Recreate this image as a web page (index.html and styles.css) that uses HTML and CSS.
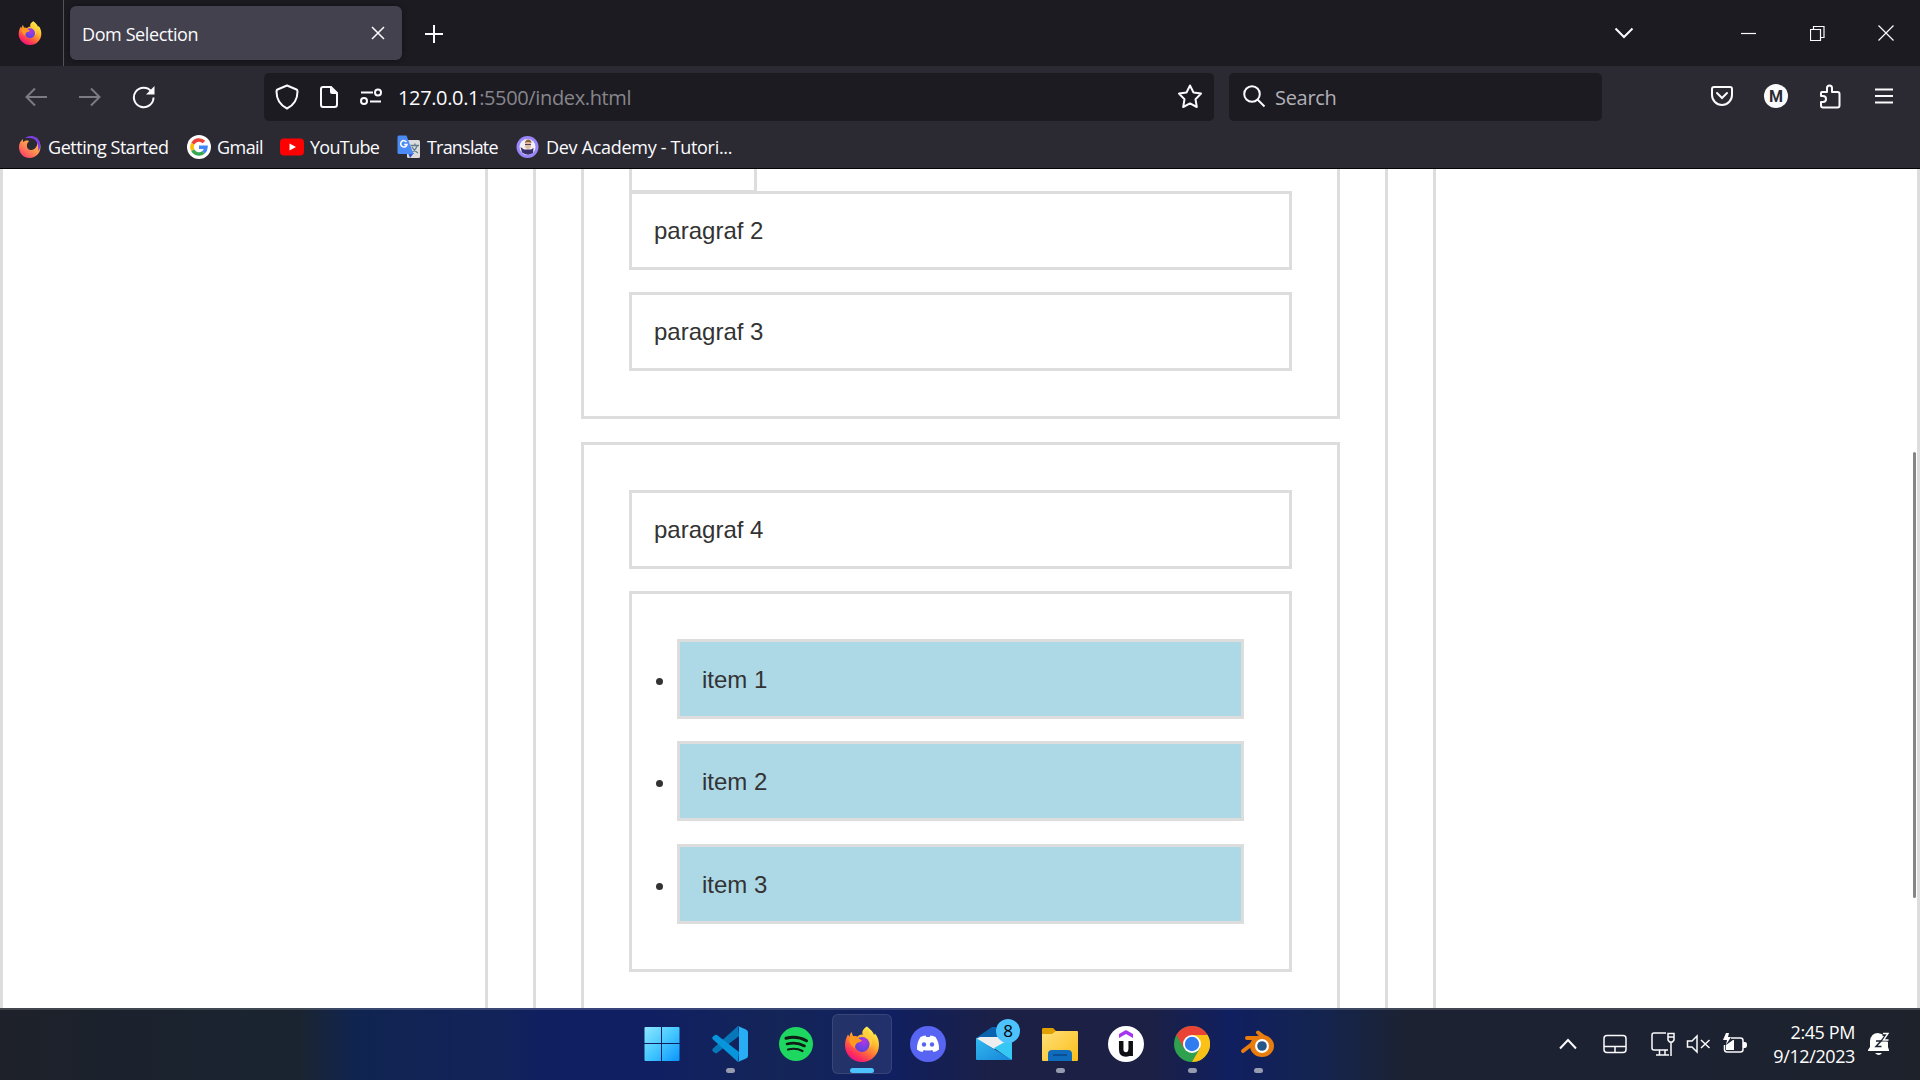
FILE: index.html
```html
<!DOCTYPE html>
<html lang="en">
<head>
<meta charset="utf-8">
<title>Dom Selection</title>
<link rel="stylesheet" href="styles.css">
</head>
<body>
<svg class="defs" width="0" height="0" aria-hidden="true">
  <defs>
    <linearGradient id="fox" x1=".85" y1=".1" x2=".3" y2="1"><stop offset="0" stop-color="#fff44f"/><stop offset=".35" stop-color="#ffb52e"/><stop offset=".6" stop-color="#ff7139"/><stop offset=".85" stop-color="#ff2a5f"/><stop offset="1" stop-color="#e31587"/></linearGradient>
    <radialGradient id="globe" cx=".6" cy=".3" r=".8"><stop offset="0" stop-color="#b833e1"/><stop offset=".5" stop-color="#7542e5"/><stop offset="1" stop-color="#5b3fd0"/></radialGradient>
    <linearGradient id="win" x1="0" y1="0" x2="1" y2="1"><stop offset="0" stop-color="#8ee6ff"/><stop offset=".5" stop-color="#45c8ff"/><stop offset="1" stop-color="#0a94ff"/></linearGradient>
    <linearGradient id="folder" x1="0" y1="0" x2="1" y2="1"><stop offset="0" stop-color="#ffe07a"/><stop offset="1" stop-color="#fbbd18"/></linearGradient>
    <linearGradient id="mail" x1="0" y1="0" x2="1" y2="1"><stop offset="0" stop-color="#32b9f0"/><stop offset="1" stop-color="#1685d8"/></linearGradient>
    <linearGradient id="swirl" x1="1" y1="0" x2=".2" y2="1"><stop offset="0" stop-color="#7542e5"/><stop offset=".25" stop-color="#ffbd4f"/><stop offset=".6" stop-color="#ff8a50"/><stop offset="1" stop-color="#ff3a6a"/></linearGradient>
    <symbol id="firefox" viewBox="0 0 36 36">
      <path fill="url(#fox)" d="M23 .5C27 4 29.500 6 30 9L31 7.500C34 11 35 15 35 19C35 28.500 27.500 36 18 36C8.500 36 1 28.500 1 19.500C1 15 2.400 11 4 8.500L5.500 11C5.500 9 6.500 7 7.500 6L9 10C11 10 12 10 13 11C15 9 17.500 8 19 9C17 6 19.500 2.500 23 .5Z"/>
      <circle cx="18" cy="18.500" r="7.500" fill="url(#globe)"/>
      <path fill="#ff9820" d="M5 12C9 9 14 10 14 12L18 14.500C17 16 14.500 16 13 17C11.500 18.500 11 20 11 22C8 21 5 17 5 12Z"/>
      <path fill="#ffcf3d" d="M19 9C25 11 28 17 25 22C29 18 29 12 25 8L24 3C21 5 20 7 19 9Z"/>
    </symbol>
  </defs>
</svg>

<header class="browser">
  <div class="tabstrip">
    <div class="view-button"><svg width="24" height="24"><use href="#firefox"/></svg></div>
    <div class="tab">
      <span class="tab-title">Dom Selection</span>
      <svg class="line" width="14" height="14" viewBox="0 0 14 14"><path d="M1 1L13 13M13 1L1 13"/></svg>
    </div>
    <svg class="line new-tab" width="18" height="18" viewBox="0 0 18 18"><path stroke-width="2" d="M9 0V18M0 9H18"/></svg>
    <div class="window-controls">
      <svg class="line" width="20" height="12" viewBox="0 0 20 12"><path stroke-width="2" d="M1.500 1.500L10 10L18.500 1.500"/></svg>
      <svg class="line thin minimize" width="15" height="3" viewBox="0 0 15 3"><path d="M0 1.500H15"/></svg>
      <svg class="line thin restore" width="15" height="15" viewBox="0 0 15 15"><path d="M.5 3.500H10.500V14.500H.5ZM3.500 3.500V.5H14V11.500H11"/></svg>
      <svg class="line thin" width="16" height="16" viewBox="0 0 16 16"><path d="M.5 .5L15.500 15.500M15.500 .5L.5 15.500"/></svg>
    </div>
  </div>

  <div class="navbar">
    <div class="history">
      <svg class="line dim" width="22" height="20" viewBox="0 0 22 20"><path d="M22 10H1.500M10 1.500L1.500 10L10 18.500"/></svg>
      <svg class="line dim" width="22" height="20" viewBox="0 0 22 20"><path d="M0 10H20.500M12 1.500L20.500 10L12 18.500"/></svg>
      <svg class="line" width="24" height="24" viewBox="0 0 24 24"><path stroke-width="2" d="M19.500 6.500A9.800 9.800 0 1 0 21.500 12.500"/><path fill="#fbfbfe" stroke="none" d="M22.500 1V9.500H14Z"/></svg>
    </div>
    <div class="urlbar">
      <svg class="line" width="24" height="26" viewBox="0 0 24 26"><path stroke-width="2" stroke-linejoin="round" d="M12 1.500L21.500 5.500Q22.500 6 22.500 7.500C22.500 15 19 21 12 24.500C5 21 1.500 15 1.500 7.500Q1.500 6 2.500 5.500Z"/></svg>
      <svg class="line page-icon" width="20" height="24" viewBox="0 0 20 24"><path stroke-width="2" d="M4 2H12L18 8V19.500Q18 22 15.500 22H4Q2 22 2 19.500V4Q2 2 4 2Z"/><path fill="#fbfbfe" stroke="none" d="M11 2L18.500 9H13Q11 9 11 7Z"/></svg>
      <svg class="line sliders" width="22" height="18" viewBox="0 0 22 18"><path stroke-width="2" d="M1 4.500H13M10 13.500H21"/><circle stroke-width="2" cx="18" cy="4.500" r="3"/><circle stroke-width="2" cx="4" cy="13" r="3"/></svg>
      <span class="url">127.0.0.1<span class="url-path">:5500/index.html</span></span>
      <svg class="line" width="26" height="25" viewBox="0 0 26 25"><path stroke-width="2" stroke-linejoin="round" d="M13 1.500L16.500 8.500L24 9.600L18.500 15.200L19.800 23L13 19.400L6.200 23L7.500 15.200L2 9.600L9.500 8.500Z"/></svg>
    </div>
    <div class="searchbar">
      <svg class="line" width="23" height="23" viewBox="0 0 23 23"><circle stroke-width="2" cx="9" cy="9" r="7.800"/><path stroke-width="2" d="M14.500 14.500L21.500 21.500"/></svg>
      <span class="placeholder">Search</span>
    </div>
    <div class="toolbar-actions">
      <svg class="line" width="22" height="20" viewBox="0 0 22 20"><path stroke-width="2" d="M3 1H19Q21 1 21 3V9A10 10 0 0 1 1 9V3Q1 1 3 1Z"/><path stroke-width="2" stroke-linecap="round" d="M6 7L11 12L16 7"/></svg>
      <span class="account">M</span>
      <svg class="line" width="22" height="25" viewBox="0 0 22 25"><path stroke-width="2" stroke-linejoin="round" d="M2 12V9Q2 8 3 8H8V4Q8 1.500 10.500 1.500Q13 1.500 13 4V8H18.500Q20.500 8 20.500 10V21.500Q20.500 23.500 18.500 23.500H4Q2 23.500 2 21.500V18H4Q7 18 7 15Q7 12 4 12Z"/></svg>
      <svg class="line menu" width="18" height="16" viewBox="0 0 18 16"><path stroke-width="2" d="M0 1.500H18M0 8H18M0 14.500H18"/></svg>
    </div>
  </div>

  <nav class="bookmarks">
    <a class="bookmark"><svg width="24" height="24" viewBox="0 0 24 24"><path fill="url(#swirl)" d="M5 4C1 7 0 12 2 17C5 24 15 25 20 19C24 14 23 7 18 2C21 8 19 14 14 15C9 16 7 10 11 6C8 5 7 6 5 7Z"/><path fill="#7d3fe0" d="M7 3C12-1 20 1 22 8C23 11 22 14 20 16C21 10 19 3 11 3Z"/></svg><span class="label getting-started">Getting Started</span></a>
    <a class="bookmark"><svg width="24" height="24" viewBox="0 0 24 24"><circle cx="12" cy="12" r="12" fill="#fff"/><g fill="none" stroke-width="3.500"><path stroke="#ea4335" d="M5.800 8.800A7 7 0 0 1 17 7"/><path stroke="#fbbc05" d="M5.800 15.200A7 7 0 0 1 5.800 8.800"/><path stroke="#34a853" d="M16.500 17.400A7 7 0 0 1 5.800 15.200"/><path stroke="#4285f4" d="M12 12.200H19A7 7 0 0 1 16.500 17.400"/></g></svg><span class="label gmail">Gmail</span></a>
    <a class="bookmark"><svg width="24" height="24" viewBox="0 0 24 24"><rect y="3.500" width="24" height="17" rx="4" fill="#f00"/><path fill="#fff" d="M9.500 8.500L16 12L9.500 15.500Z"/></svg><span class="label youtube">YouTube</span></a>
    <a class="bookmark"><svg width="24" height="24" viewBox="0 0 24 24"><rect x="10" y="5" width="13" height="18" rx="1.500" fill="#dcdcdc"/><path d="M13.500 10.500H22M18 8.500V10.500M20 11Q18 16 14 18M15 12Q17 16 21 18" fill="none" stroke="#607d8b" stroke-width="1.300"/><path fill="#3456c4" d="M11 18H17L13 23Z"/><path fill="#4b8bf5" d="M2 .5H9.500L16.500 19H2Q.5 19 .5 17.500V2Q.5 .5 2 .5Z"/><path d="M9.500 7A3.200 3.200 0 1 0 10 9.500H7.200" fill="none" stroke="#fff" stroke-width="1.500"/></svg><span class="label translate">Translate</span></a>
    <a class="bookmark"><svg width="24" height="24" viewBox="0 0 24 24"><circle cx="11.500" cy="12" r="11" fill="#9a86fb"/><circle cx="11.500" cy="12" r="8" fill="#f0eef6"/><path fill="#372f68" d="M4.500 12L8 14.500H15L17.500 13L17 18Q11.500 21.500 6 17.500Z"/><ellipse cx="12" cy="10" rx="3" ry="4" fill="#e4b9a0"/><path d="M9 8Q9.500 4.500 12 4.500Q15.500 4.500 15.500 8Q12 6 9 8" fill="#88613d"/><path d="M9 9.500H15" stroke="#514252"/></svg><span class="label academy">Dev Academy - Tutori...</span></a>
  </nav>
</header>

<main class="page">
  <div class="scroll-thumb"></div>
  <div class="box outer"><div class="box middle">
    <section class="box group first">
      <div class="box clipped"></div>
      <p class="box paragraph">paragraf 2</p>
      <p class="box paragraph">paragraf 3</p>
    </section>
    <section class="box group second">
      <p class="box paragraph">paragraf 4</p>
      <ul class="box list">
        <li class="box item">item 1</li>
        <li class="box item">item 2</li>
        <li class="box item">item 3</li>
      </ul>
    </section>
  </div></div>
</main>

<footer class="taskbar">
  <div class="apps">
    <div class="app start"><svg width="36" height="36" viewBox="0 0 36 36"><path fill="url(#win)" d="M1.500 1H17V17H.5V2Q.5 1 1.500 1ZM18 1H34.500Q35.500 1 35.500 2V17H18ZM.5 18H17V35H1.500Q.5 35 .5 34ZM18 18H35.500V34Q35.500 35 34.500 35H18Z"/></svg></div>
    <div class="app running"><svg width="36" height="36" viewBox="0 0 36 36"><path fill="#0877b9" d="M26 0L1 22.500Q-.5 24 1 25.500L3 27Q4 27.500 5 27L27 10Z"/><path fill="#0795dc" d="M26 36L1 13.500Q-.5 12 1 10.500L3 9Q4 8.500 5 9L27 26Z"/><path fill="#29adf4" d="M26 0L34 3.500Q36 4.500 36 6V30Q36 31.500 34 32.500L26 36Q27 35 27 33V3Q27 1 26 0Z"/></svg></div>
    <div class="app"><svg width="36" height="36" viewBox="0 0 36 36"><circle cx="18" cy="18" r="17" fill="#1ed760"/><g fill="none" stroke="#101c16" stroke-linecap="round"><path stroke-width="3" d="M8 12.300Q19 9.500 28.500 14.700"/><path stroke-width="2.600" d="M9 18Q18.500 15.500 26.500 20"/><path stroke-width="2.200" d="M10 23.500Q18 21.500 24.500 25"/></g></svg></div>
    <div class="app running active"><svg width="36" height="36"><use href="#firefox"/></svg></div>
    <div class="app"><svg width="36" height="36" viewBox="0 0 36 36"><circle cx="18" cy="18" r="18" fill="#5865f2"/><path fill="#fff" d="M10.500 11Q13 9.500 15.500 9.500L16.300 11H19.700L20.500 9.500Q23 9.500 25.500 11Q29.500 17 29 23.500Q26.500 25.500 23.500 26L22.200 24Q18 25 13.800 24L12.500 26Q9.500 25.500 7 23.500Q6.500 17 10.500 11Z"/><circle cx="14" cy="18.500" r="2.200" fill="#5865f2"/><circle cx="22" cy="18.500" r="2.200" fill="#5865f2"/></svg></div>
    <div class="app"><svg width="36" height="36" viewBox="0 0 36 36"><path fill="#0b63b0" d="M0 12L16 1H20L36 12V20H0Z"/><path fill="#eee" d="M4 11H32L31 17L18 23L0 13Z"/><path fill="#35c8f5" d="M36 12V33Q36 34 35 34L18 22Z"/><path fill="url(#mail)" d="M0 12L36 34H1Q0 34 0 33Z"/></svg><span class="badge">8</span></div>
    <div class="app running"><svg width="36" height="36" viewBox="0 0 36 36"><path fill="#dfa000" d="M0 9V3Q0 2 1.500 2H11L14 5V9Z"/><path fill="url(#folder)" d="M0 8H10L14 5H35Q36 5 36 6V34Q36 35 35 35H1Q0 35 0 34Z"/><path fill="#0f6cbd" d="M6 35V28Q6 24 10 24H26Q30 24 30 28V35Z"/><path stroke="#0a4f94" stroke-width="2" d="M11 29H25"/></svg></div>
    <div class="app"><svg width="36" height="36" viewBox="0 0 36 36"><circle cx="18" cy="18" r="18" fill="#fff"/><path fill="#a435f0" d="M18 4L25 8V12L18 8L11 12V8Z"/><path fill="none" stroke="#101014" stroke-width="4.500" d="M13.200 15V23.500Q13.200 28.500 18 28.500Q22.500 28.500 22.500 23.500M22.700 15V30"/></svg></div>
    <div class="app running"><svg width="36" height="36" viewBox="0 0 36 36"><circle cx="18" cy="18" r="18" fill="#2fa04d"/><path fill="#ea4335" d="M2.400 9A18 18 0 0 1 33.600 9H18L10.200 22.500Z"/><path fill="#fbc116" d="M33.600 9A18 18 0 0 1 18 36L25.800 22.500L18 9Z"/><circle cx="18" cy="18" r="9" fill="#fff"/><circle cx="18" cy="18" r="7.200" fill="#2f7cf0"/></svg></div>
    <div class="app running"><svg width="36" height="36" viewBox="0 0 36 36"><g fill="none" stroke="#e87d0d" stroke-width="4" stroke-linecap="round"><path d="M18 6.500L29 15"/><path d="M7 12H22"/><path d="M3 25L18 13.500"/></g><ellipse cx="22" cy="20" rx="12" ry="11" fill="#e87d0d"/><circle cx="22" cy="20" r="7" fill="#fff"/><circle cx="22" cy="20" r="4.800" fill="#265787"/></svg></div>
  </div>
  <div class="tray">
    <svg class="line" width="18" height="12" viewBox="0 0 18 12"><path stroke-width="2" d="M1 10.500L9 2L17 10.500"/></svg>
    <svg class="line touchpad" width="24" height="20" viewBox="0 0 24 20"><rect x="1" y="1.500" width="22" height="17" rx="3"/><path d="M1 12.500H23M12 12.500V18"/></svg>
    <svg class="line" width="26" height="26" viewBox="0 0 26 26"><path d="M16 2H4Q2 2 2 4V17Q2 19 4 19H18M6 24H19M9.500 19V24M15 19V24M18 2.500H24V9L22.500 11H19.500L18 9ZM18 6H24M21 11V25"/></svg>
    <svg class="line volume" width="25" height="20" viewBox="0 0 25 20"><path d="M1.500 7H6L11 2V18L6 13H1.500ZM15 6L23.500 14M23.500 6L15 14"/></svg>
    <svg class="line battery" width="26" height="22" viewBox="0 0 26 22"><path d="M9 5H18.500Q21 5 21 7.500V16.500Q21 19 18.500 19H5Q2.500 19 2.500 16.500V12"/><path fill="#fff" stroke="none" d="M4 17V12L11 7H12V17ZM21 9H23Q25 9 25 12Q25 15 23 15H21ZM4 0H7L6 4H9L4 12L5 7H1Z"/></svg>
    <div class="clock"><span class="time">2:45 PM</span><span class="date">9/12/2023</span></div>
    <svg class="bell" width="22" height="24" viewBox="0 0 22 24"><path fill="#fff" d="M0 18L2 15V9Q3 1 10 1L17 3V7L20 10V15L21 18V19H0ZM7 21H14Q11 25 7 21Z"/><path fill="none" stroke="#1c2231" stroke-width="1.500" d="M8 9H13L8 14.500H13.500"/><path fill="none" stroke="#1c2231" stroke-width="3" d="M14.500 2.500H19L15 8H20"/><path fill="none" stroke="#fff" stroke-width="1.400" d="M15 1.500H20L15.500 8H20.500"/></svg>
  </div>
</footer>
</body>
</html>
```
FILE: styles.css
```css
* { box-sizing: border-box; }

body {
  margin: 0;
  width: 1920px;
  height: 1080px;
  overflow: hidden;
  display: flex;
  flex-direction: column;
  font-family: "Open Sans", "Noto Sans", sans-serif;
  color: #fbfbfe;
}

svg { display: block; flex: none; }
.defs { position: absolute; }
.line { fill: none; stroke: #fbfbfe; stroke-width: 1.5; }
.thin { stroke-width: 1.2; }
.dim { stroke: #7c7b82; stroke-width: 2; }

/* Browser chrome */
.browser { height: 169px; background: #2b2a33; border-bottom: 1px solid #050507; }
.tabstrip { height: 66px; background: #1c1b22; display: flex; align-items: center; }
.view-button { width: 64px; height: 66px; padding: 21px 0 0 18px; border-right: 1px solid #54535b; }
.tab {
  width: 332px; height: 54px; margin-left: 6px; padding: 0 17px 0 12px;
  display: flex; align-items: center; justify-content: space-between;
  border-radius: 6px; background: #42414d; box-shadow: 0 0 5px #111017;
}
.tab-title { font-size: 18px; letter-spacing: -0.4px; white-space: nowrap; padding-top: 1px; }
.new-tab { margin: 2px 0 0 23px; }
.window-controls { margin-left: auto; padding-right: 26px; display: flex; align-items: center; }
.minimize { margin-left: 107px; }
.restore { margin: 0 53.500px 0 54px; }

.navbar { height: 62px; display: flex; align-items: center; }
.history { width: 264px; padding-left: 25px; display: flex; align-items: center; gap: 32px; }
.history svg:last-child { margin-left: -1px; }
.urlbar, .searchbar { height: 48px; display: flex; align-items: center; border-radius: 5px; background: #1c1b22; margin-top: -1px; }
.urlbar { width: 950px; padding: 0 11px; }
.page-icon { margin-left: 20px; }
.sliders { margin-left: 21px; }
.url { flex: 1; margin-left: 16px; padding-top: 2px; font-size: 20px; letter-spacing: -0.36px; }
.url-path { color: #87868c; }
.searchbar { width: 373px; margin-left: 15px; padding-left: 14px; }
.placeholder { margin-left: 9px; padding-top: 2px; font-size: 20px; letter-spacing: -0.3px; color: #b2b1b7; }
.toolbar-actions { margin: -2px 0 0 auto; padding-right: 27px; display: flex; align-items: center; }
.toolbar-actions svg:first-child { margin-right: 31px; }
.toolbar-actions svg:nth-child(3) { margin: 0 34px 0 31px; }
.menu { margin-top: -1px; }
.account {
  width: 24px; height: 24px; border-radius: 50%; background: #fbfbfe; color: #2b2a33;
  font: 700 16px/25px Roboto, sans-serif; text-align: center;
}

.bookmarks { height: 40px; display: flex; align-items: center; padding: 0 0 2px 18px; gap: 18px; }
.bookmark { display: flex; align-items: center; gap: 6px; }
.label { font-size: 18px; white-space: nowrap; }
.getting-started { width: 121px; letter-spacing: -0.45px; }
.gmail { width: 45px; letter-spacing: -0.55px; }
.youtube { width: 69px; letter-spacing: -0.7px; }
.translate { width: 71px; letter-spacing: -0.8px; }
.academy { letter-spacing: -0.3px; }

/* Document */
.page {
  position: relative; height: 839px; overflow: hidden; background: #fff;
  border: solid #ddd; border-width: 0 3px;
  font: 24px "Liberation Sans", Arial, sans-serif; color: #333;
}
.scroll-thumb { position: absolute; z-index: 1; right: 1px; top: 283px; width: 3px; height: 446px; border-radius: 2px; background: #868686; }
.box { border: 3px solid #ddd; }
.outer { width: 951px; height: 900px; margin-left: 482px; padding: 0 45px; border-width: 0 3px; }
.middle { height: 900px; padding: 0 45px; border-width: 0 3px; }
.group { padding: 45px; display: flex; flex-direction: column; gap: 22px; }
.first { height: 250px; padding-top: 0; border-top: 0; }
.second { height: 700px; margin-top: 23px; }
.clipped { width: 128px; height: 24px; margin-bottom: -24px; border-top: 0; }
.paragraph { height: 79px; flex: none; margin: 0; padding: 0 22px; line-height: 73px; }
.list { flex: none; height: 381px; margin: 0; padding: 45px; display: flex; flex-direction: column; gap: 22.400px; }
.item { display: list-item; height: 80px; flex: none; padding: 0 22px; line-height: 75px; background: #add8e6; }

/* Desktop taskbar */
.taskbar {
  height: 72px; padding-bottom: 2px; border-top: 2px solid #ffffff2a;
  background-color: #1c2231;
  background-image: linear-gradient(90deg, #1e2129 0, #1b222d 120px, #1a2431 300px, #102450 355px, #12235a 500px, #101f60 540px, #101f62 650px, #142558 780px, #101f60 890px, #1b2044 1000px, #1b2044 1150px, #101f60 1230px, #14244f 1320px, #1c2231 1410px, #1c2231 1700px, #1d222b 1920px);
  display: flex; align-items: center; color: #fff;
}
.apps { display: flex; margin-left: 632px; gap: 6px; }
.app { position: relative; width: 60px; height: 60px; display: grid; place-items: center; border-radius: 6px; }
.start { margin-right: 2px; }
.app.active { background: #ffffff14; border: 1px solid #ffffff18; }
.running::after { content: ""; position: absolute; bottom: 1px; left: 26px; width: 9px; height: 5px; border-radius: 3px; background: #969bb0; }
.active::after { left: 17px; bottom: 0; width: 24px; background: #4cc2ff; }
.badge {
  position: absolute; left: 32px; top: 5px; width: 24px; height: 24px; border-radius: 50%;
  background: #4cc2ff; color: #000; font-size: 17px; line-height: 24px; text-align: center;
}
.tray { margin-left: auto; padding-right: 30px; display: flex; align-items: center; }
.touchpad { margin: 0 23px 0 26px; }
.volume { margin-left: 10px; }
.battery { margin-left: 11px; }
.clock { width: 107px; display: flex; flex-direction: column; align-items: flex-end; font-size: 18px; line-height: 24px; letter-spacing: -0.4px; }
.bell { margin-left: 13px; }
```
